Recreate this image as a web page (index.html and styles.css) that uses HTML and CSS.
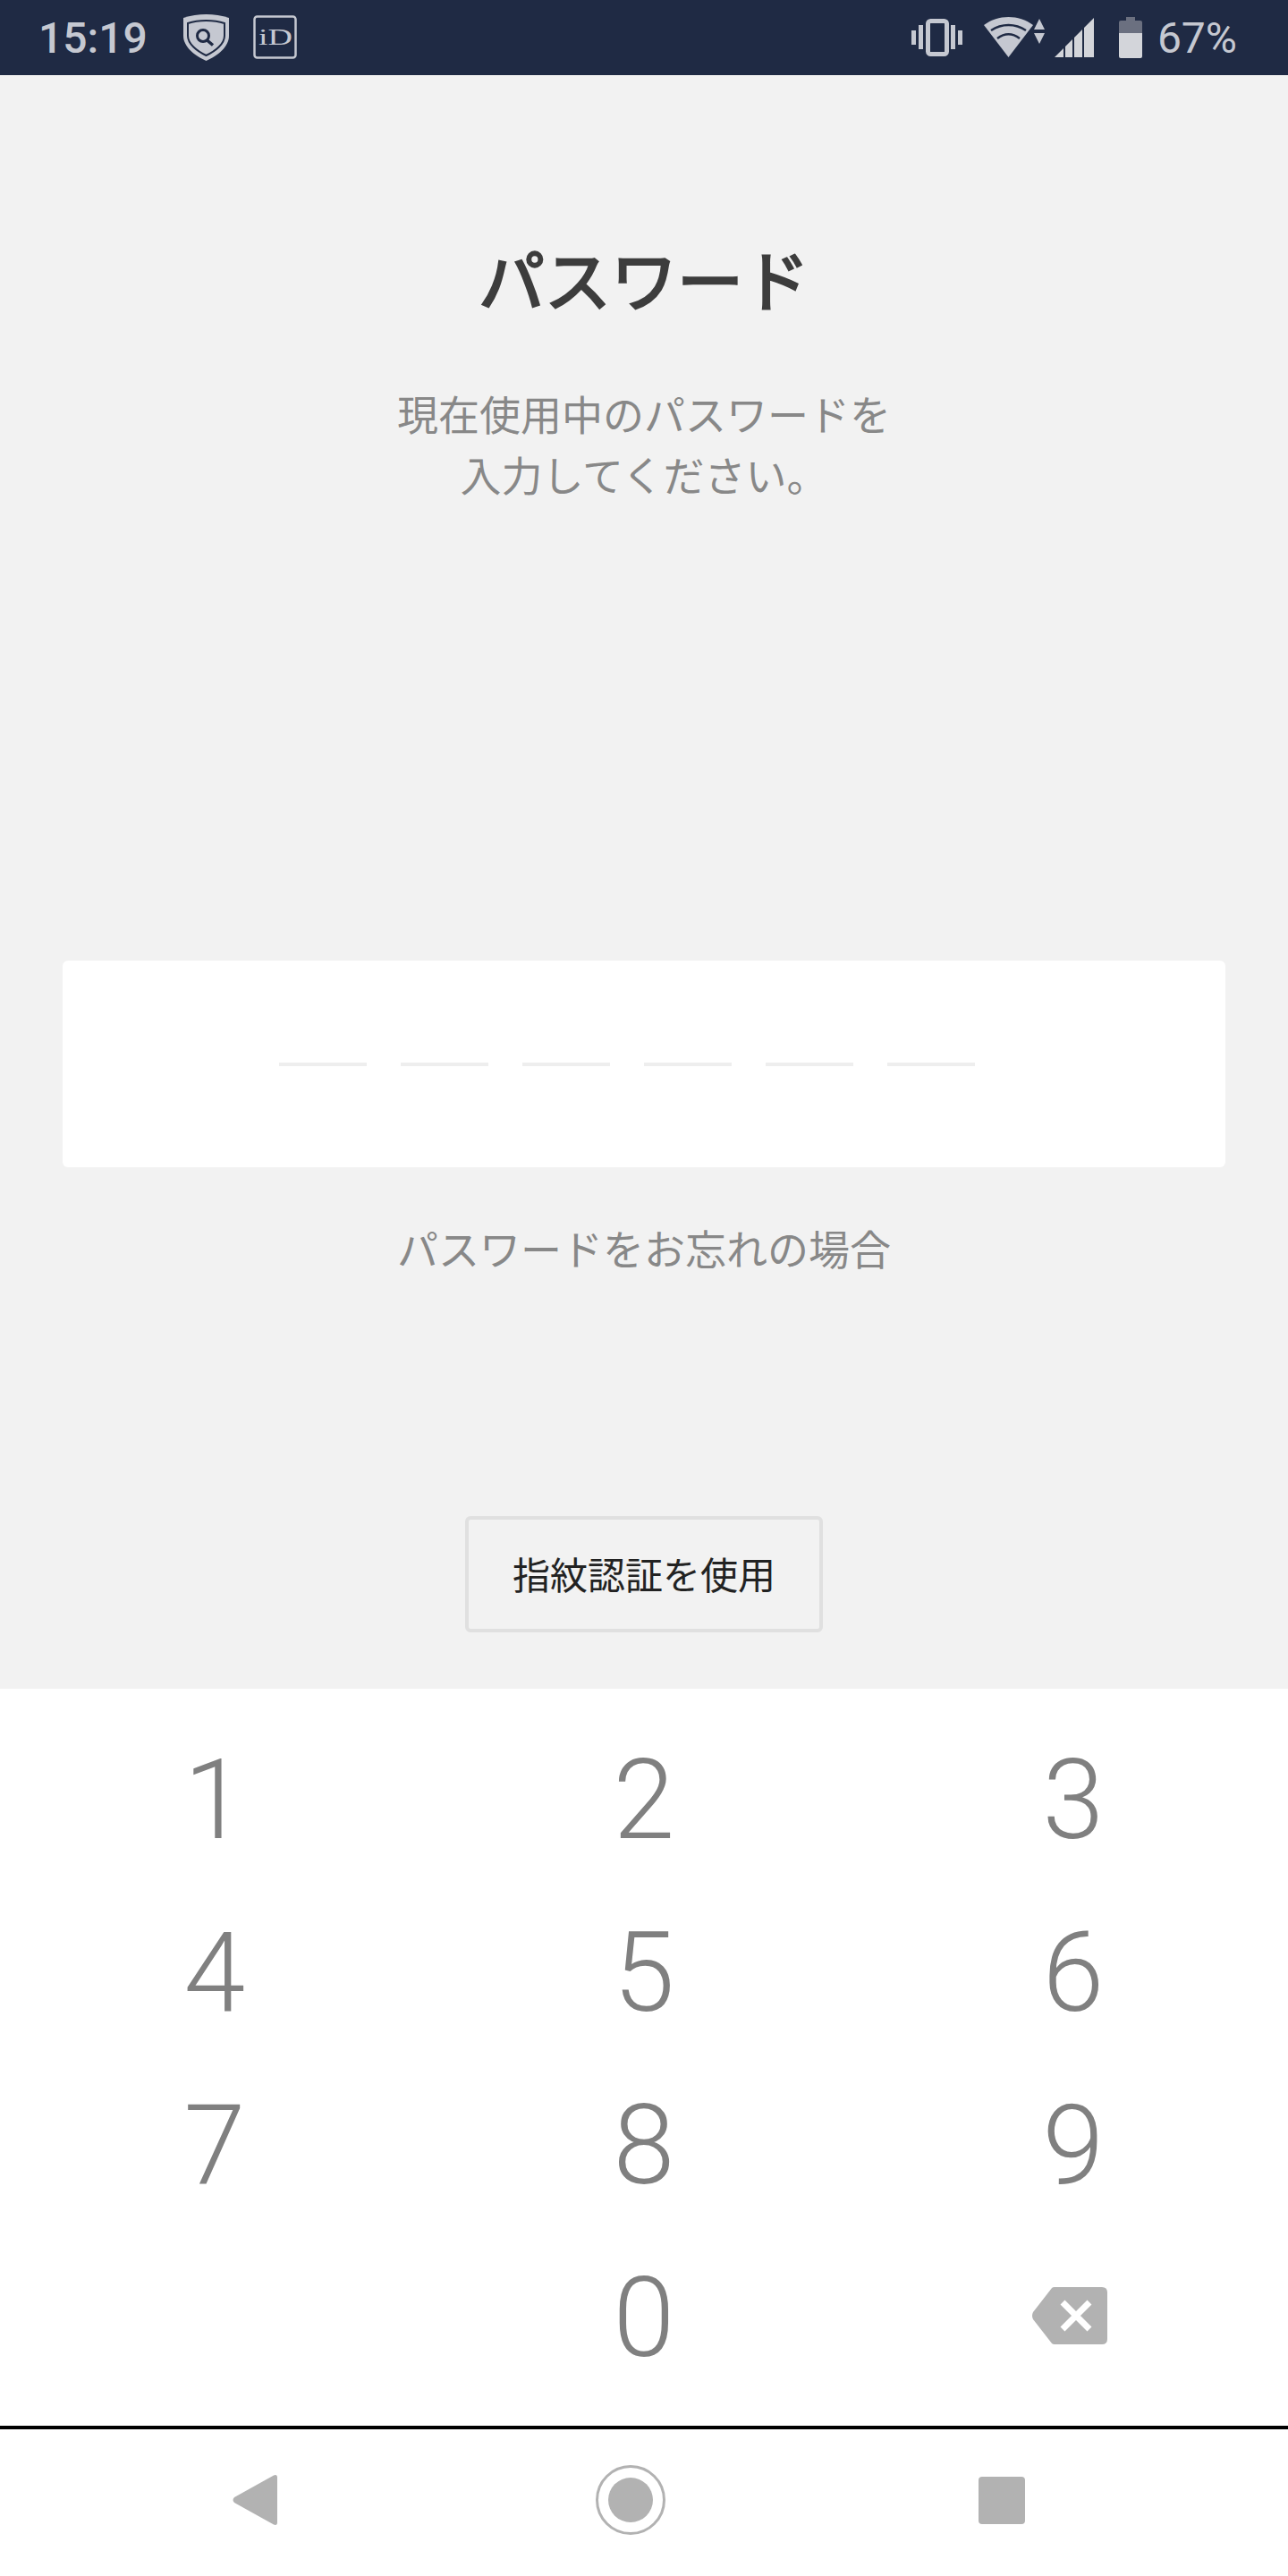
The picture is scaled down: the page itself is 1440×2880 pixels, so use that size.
FILE: index.html

```html
<!DOCTYPE html>
<html lang="ja">
<head>
  <meta charset="UTF-8">
  <meta name="viewport" content="width=device-width, initial-scale=1.0">
  <title>パスワード</title>
  <link rel="stylesheet" href="styles.css">
</head>
<body>

  <!-- Status bar -->
  <div class="status-bar">
    <div class="status-left">
      <span class="status-time">15:19</span>
      <svg class="icon-shield" width="52" height="52" viewBox="0 0 52 52">
        <path fill="#c5c8d1" d="M25.500 0C34 0 43 1.500 51 4V24C51 36 39 46 25.500 52C12 46 0 36 0 24V4C8 1.500 17 0 25.500 0Z"/>
        <path fill="none" stroke="#1f2a44" stroke-width="2" d="M25.500 7C33 7 40 8 46 10V24C46 33 36 41 25.500 46C15 41 5 33 5 24V10C11 8 18 7 25.500 7Z"/>
        <circle cx="22" cy="24" r="6.500" fill="none" stroke="#1f2a44" stroke-width="3"/>
        <path d="M26.500 29L33 34.500" stroke="#1f2a44" stroke-width="3.500"/>
      </svg>
      <svg class="icon-id" width="50" height="50" viewBox="0 0 50 50">
        <rect x="1.500" y="1.500" width="46" height="46" rx="3" fill="none" stroke="#c5c8d1" stroke-width="2.500"/>
        <text x="6" y="33" class="icon-id-text" textLength="38" lengthAdjust="spacingAndGlyphs">iD</text>
      </svg>
    </div>
    <div class="status-right">
      <svg class="icon-vibrate" width="57" height="42" viewBox="0 0 57 42" fill="#c5c8d1">
        <rect x="0" y="13" width="5" height="16"/>
        <rect x="8" y="7" width="5" height="27"/>
        <rect x="18.500" y="2.500" width="21" height="37" rx="3" fill="none" stroke="#c5c8d1" stroke-width="5"/>
        <rect x="44" y="7" width="5" height="27"/>
        <rect x="52" y="13" width="5" height="16"/>
      </svg>
      <svg class="icon-wifi" width="68" height="46" viewBox="0 0 68 46">
        <path fill="#c5c8d1" d="M0 9C16 -3 39 -3 55 9L27.500 45Z"/>
        <path fill="none" stroke="#1f2a44" stroke-width="2.500" d="M8 15C20 7 35 7 47 15M15 24C23 18 32 18 40 24"/>
        <path fill="#c5c8d1" d="M62 2L68 14H56ZM56 18H68L62 30Z"/>
      </svg>
      <svg class="icon-signal" width="44" height="44" viewBox="0 0 44 44" fill="#d3d5da">
        <path d="M0 44L10 34V44ZM12 32L20 24V44H12ZM22 22L31 13V44H22ZM33 11L44 0V44H33Z"/>
      </svg>
      <svg class="icon-battery" width="26" height="46" viewBox="0 0 26 46">
        <path fill="#6b7080" d="M8 0H18V4H24Q26 4 26 6V18H0V6Q0 4 2 4H8Z"/>
        <path fill="#d3d5da" d="M0 18H26V44Q26 46 24 46H2Q0 46 0 44Z"/>
      </svg>
      <span class="status-battery">67%</span>
    </div>
  </div>

  <!-- Password form -->
  <div class="main">
    <div class="title">パスワード</div>
    <div class="subtitle">現在使用中のパスワードを<br>入力してください。</div>
    <div class="code-box">
      <span class="code-dash"></span>
      <span class="code-dash"></span>
      <span class="code-dash"></span>
      <span class="code-dash"></span>
      <span class="code-dash"></span>
      <span class="code-dash"></span>
    </div>
    <div class="forgot">パスワードをお忘れの場合</div>
    <button class="fingerprint-button">指紋認証を使用</button>
  </div>

  <!-- Number pad -->
  <div class="keypad">
    <div class="key">1</div>
    <div class="key">2</div>
    <div class="key">3</div>
    <div class="key">4</div>
    <div class="key">5</div>
    <div class="key">6</div>
    <div class="key">7</div>
    <div class="key">8</div>
    <div class="key">9</div>
    <div class="key"></div>
    <div class="key">0</div>
    <div class="key">
      <svg class="icon-delete" width="84" height="64" viewBox="0 0 84 64">
        <path fill="#b2b2b2" d="M25 0H78Q84 0 84 6V58Q84 64 78 64H25Q23 64 22 63L1 36Q-1 32 1 28L22 1Q23 0 25 0Z"/>
        <path stroke="#fff" stroke-width="7" d="M34 17L64 47M64 17L34 47"/>
      </svg>
    </div>
  </div>

  <!-- Navigation bar -->
  <div class="nav-bar">
    <svg width="50" height="56" viewBox="0 0 50 56">
      <path fill="#b2b2b2" d="M46 0.500Q50 -1 50 3V53Q50 57 46 55.500L2 31Q-1 28 2 25Z"/>
    </svg>
    <svg class="nav-home" width="78" height="78" viewBox="0 0 78 78">
      <circle cx="39" cy="39" r="37.500" fill="none" stroke="#b2b2b2" stroke-width="3"/>
      <circle cx="39" cy="39" r="25" fill="#b2b2b2"/>
    </svg>
    <svg class="nav-recent" width="52" height="53" viewBox="0 0 52 53">
      <rect width="52" height="53" rx="4" fill="#b2b2b2"/>
    </svg>
  </div>

</body>
</html>
```

FILE: styles.css

```css
body {
  font-family: "Noto Sans CJK JP", "Noto Sans", sans-serif;
  margin: 0;
  padding: 0;
  width: 1440px;
  height: 2880px;
  display: flex;
  flex-direction: column;
  background-color: #fff;
}

.status-bar {
  height: 84px;
  flex: none;
  display: flex;
  align-items: center;
  justify-content: space-between;
  padding: 0 57px 0 43px;
  background-color: #1f2a44;
  color: #c5c8d1;
  font-family: Roboto, sans-serif;
  font-size: 48px;
}

.status-left,
.status-right {
  display: flex;
  align-items: center;
}

.status-time {
  font-weight: 500;
  width: 162px;
}

.icon-shield {
  margin-right: 26px;
}

.icon-id-text {
  font-family: "Liberation Serif", serif;
  font-size: 25px;
  fill: #c5c8d1;
}

.icon-wifi {
  margin-left: 24px;
}

.icon-signal {
  margin-left: 11px;
}

.icon-battery {
  margin-left: 28px;
  margin-right: 17px;
}

.main {
  height: 1804px;
  flex: none;
  box-sizing: border-box;
  padding-top: 186px;
  display: flex;
  flex-direction: column;
  align-items: center;
  background-color: #f2f2f2;
  text-align: center;
}

.title {
  font-size: 74px;
  line-height: 80px;
  font-weight: 400;
  -webkit-text-stroke: 2.5px #3d3d3d;
  color: #3d3d3d;
}

.subtitle {
  margin-top: 77px;
  font-size: 46px;
  line-height: 68px;
  color: #888;
}

.code-box {
  margin-top: 511px;
  width: 1300px;
  height: 231px;
  display: flex;
  align-items: center;
  justify-content: center;
  background-color: #fff;
  border-radius: 6px;
}

.code-dash {
  width: 98px;
  height: 4px;
  margin-right: 38px;
  background-color: #eee;
}

.forgot {
  margin-top: 55px;
  font-size: 46px;
  line-height: 68px;
  color: #888;
}

.fingerprint-button {
  margin-top: 267px;
  width: 400px;
  height: 130px;
  border: 4px solid #e0e0e0;
  border-radius: 6px;
  background-color: #f2f2f2;
  color: #222;
  font-family: inherit;
  font-size: 42px;
  padding: 0 0 4px;
}

.keypad {
  height: 828px;
  flex: none;
  box-sizing: border-box;
  padding-top: 28px;
  display: grid;
  grid-template-columns: repeat(3, 480px);
  grid-auto-rows: 193px;
  border-bottom: 4px solid #000;
  background-color: #fff;
}

.key {
  display: flex;
  align-items: center;
  justify-content: center;
  font-family: Roboto, sans-serif;
  font-size: 124px;
  font-weight: 300;
  color: #808080;
}

.icon-delete {
  margin: 0 8px 6px 0;
}

.nav-bar {
  flex: 1;
  display: flex;
  align-items: center;
  padding: 0 0 6px 260px;
  background-color: #fff;
}

.nav-home {
  margin-left: 356px;
}

.nav-recent {
  margin-left: 350px;
}
```
